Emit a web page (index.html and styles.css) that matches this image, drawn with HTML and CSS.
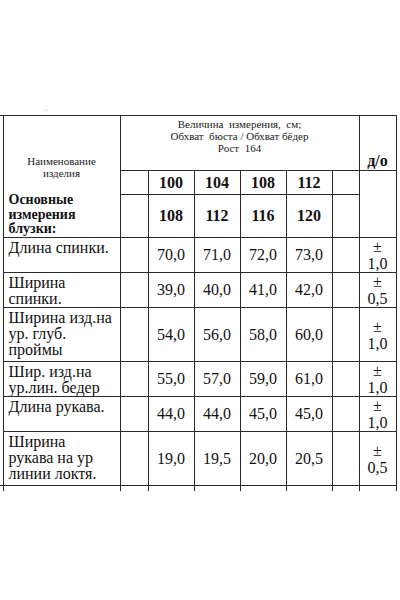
FILE: index.html
```html
<!DOCTYPE html>
<html lang="ru">
<head>
<meta charset="utf-8">
<title>Таблица измерений</title>
<link rel="stylesheet" href="styles.css">
</head>
<body>
<div class="page">
  <div class="pre"><span class="dots">‥</span></div>
  <table class="grid">
    <colgroup>
      <col class="c-edge">
      <col class="c-name">
      <col class="c-gap">
      <col class="c-num">
      <col class="c-num">
      <col class="c-num">
      <col class="c-num">
      <col class="c-gap2">
      <col class="c-tol">
    </colgroup>
    <tr class="r-head">
      <td class="edge edge-top"></td>
      <td class="name-head" rowspan="3">
        <div class="nm">Наименование<br>изделия</div>
        <div class="bold-title">Основные<br>измерения<br>блузки:</div>
      </td>
      <td class="size-head" colspan="6">Величина&nbsp; измерения,&nbsp; см;<br>Обхват&nbsp; бюста / Обхват бёдер<br>Рост&nbsp; 164</td>
      <td class="tol-head">д/о</td>
    </tr>
    <tr class="r-s1">
      <td class="edge"></td>
      <td></td>
      <td class="bnum">100</td>
      <td class="bnum">104</td>
      <td class="bnum">108</td>
      <td class="bnum">112</td>
      <td></td>
      <td rowspan="2"></td>
    </tr>
    <tr class="r-s2">
      <td class="edge"></td>
      <td></td>
      <td class="bnum">108</td>
      <td class="bnum">112</td>
      <td class="bnum">116</td>
      <td class="bnum">120</td>
      <td></td>
    </tr>
    <tr class="r-35">
      <td class="edge"></td>
      <td class="name">Длина спинки.</td>
      <td></td>
      <td class="num">70,0</td>
      <td class="num">71,0</td>
      <td class="num">72,0</td>
      <td class="num">73,0</td>
      <td></td>
      <td class="tol">±<br>1,0</td>
    </tr>
    <tr class="r-35">
      <td class="edge"></td>
      <td class="name">Ширина<br>спинки.</td>
      <td></td>
      <td class="num">39,0</td>
      <td class="num">40,0</td>
      <td class="num">41,0</td>
      <td class="num">42,0</td>
      <td></td>
      <td class="tol">±<br>0,5</td>
    </tr>
    <tr class="r-54">
      <td class="edge"></td>
      <td class="name">Ширина изд.на<br>ур. глуб.<br>проймы</td>
      <td></td>
      <td class="num">54,0</td>
      <td class="num">56,0</td>
      <td class="num">58,0</td>
      <td class="num">60,0</td>
      <td></td>
      <td class="tol">±<br>1,0</td>
    </tr>
    <tr class="r-34">
      <td class="edge"></td>
      <td class="name">Шир. изд.на<br>ур.лин. бедер</td>
      <td></td>
      <td class="num">55,0</td>
      <td class="num">57,0</td>
      <td class="num">59,0</td>
      <td class="num">61,0</td>
      <td></td>
      <td class="tol">±<br>1,0</td>
    </tr>
    <tr class="r-35">
      <td class="edge"></td>
      <td class="name">Длина рукава.</td>
      <td></td>
      <td class="num">44,0</td>
      <td class="num">44,0</td>
      <td class="num">45,0</td>
      <td class="num">45,0</td>
      <td></td>
      <td class="tol">±<br>1,0</td>
    </tr>
    <tr class="r-54">
      <td class="edge edge-bottom"></td>
      <td class="name">Ширина<br>рукава на ур<br>линии локтя.</td>
      <td></td>
      <td class="num">19,0</td>
      <td class="num">19,5</td>
      <td class="num">20,0</td>
      <td class="num">20,5</td>
      <td></td>
      <td class="tol">±<br>0,5</td>
    </tr>
    <tr class="r-stub">
      <td class="edge"></td>
      <td class="stub"></td>
      <td class="stub"></td>
      <td class="stub"></td>
      <td class="stub"></td>
      <td class="stub"></td>
      <td class="stub"></td>
      <td class="stub"></td>
      <td class="stub"></td>
    </tr>
  </table>
</div>
</body>
</html>
```
FILE: styles.css
```css
html, body {
  margin: 0;
  padding: 0;
  background: #ffffff;
}

body {
  font-family: "Liberation Serif", "Times New Roman", serif;
  color: #111111;
}

.page {
  width: 400px;
  height: 600px;
  overflow: hidden;
}

.pre {
  height: 115px;
  box-sizing: border-box;
  padding: 104px 0 0 44px;
  font-size: 9px;
  line-height: 9px;
  color: #c8c8c8;
}

.grid {
  border-collapse: collapse;
  table-layout: fixed;
  width: 396px;
}

.c-edge { width: 3px; }
.c-name { width: 117px; }
.c-gap { width: 28px; }
.c-num { width: 46px; }
.c-gap2 { width: 27px; }
.c-tol { width: 37px; }

.grid td {
  border: 1px solid #2a2a2a;
  padding: 0;
  font-family: "Liberation Serif", "Times New Roman", serif;
  font-size: 16px;
  line-height: 16px;
  text-align: center;
  vertical-align: middle;
  overflow: hidden;
}

.grid td.edge {
  border-top: none;
  border-bottom: none;
  border-left: none;
}

.grid td.edge-top {
  border-top: 1px solid #2a2a2a;
}

.grid td.edge-bottom {
  border-bottom: 1px solid #2a2a2a;
}

.r-head { height: 55px; }
.r-s1 { height: 24px; }
.r-s2 { height: 43px; }
.r-35 { height: 35px; }
.r-34 { height: 34px; }
.r-54 { height: 54px; }
.r-stub { height: 5px; }

.grid td.stub {
  border-bottom: none;
  padding: 0;
  line-height: 0;
  font-size: 0;
}

.grid td.name-head {
  vertical-align: top;
  text-align: left;
  padding: 0 0 0 5px;
}

.nm {
  font-size: 11px;
  line-height: 12px;
  text-align: center;
  margin-top: 39px;
  padding-right: 5px;
  color: #222;
}

.bold-title {
  font-size: 14px;
  line-height: 14.5px;
  font-weight: bold;
  margin-top: 14px;
  white-space: nowrap;
}

.grid td.size-head {
  vertical-align: top;
  font-size: 11px;
  line-height: 12px;
  padding-top: 2px;
  color: #222;
  white-space: nowrap;
}

.grid td.tol-head {
  vertical-align: bottom;
  font-weight: bold;
  font-size: 16px;
  line-height: 16px;
  padding-bottom: 1px;
}

.grid td.bnum {
  font-weight: bold;
  font-size: 16px;
}

.grid td.name {
  vertical-align: top;
  text-align: left;
  padding: 2px 0 0 5px;
  white-space: nowrap;
}

.grid td.num {
  font-size: 16px;
}

.grid td.tol {
  font-size: 16px;
  line-height: 17px;
}
```
